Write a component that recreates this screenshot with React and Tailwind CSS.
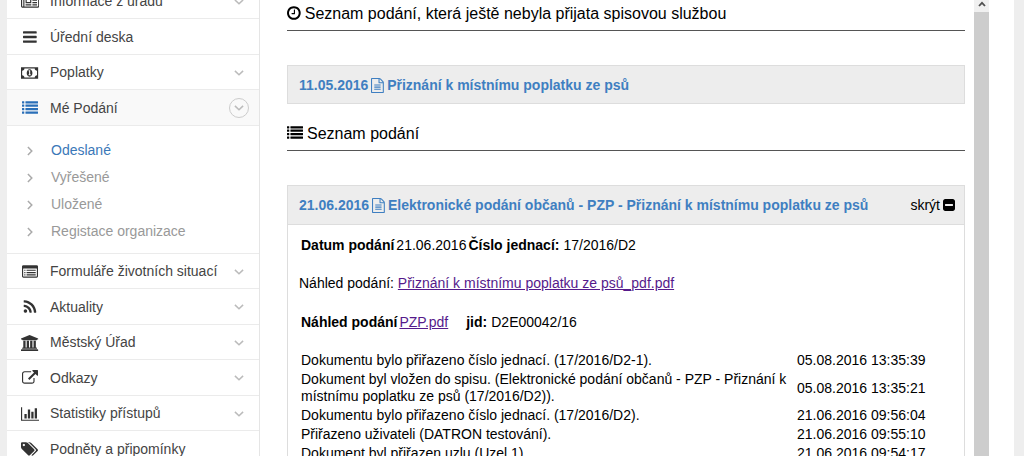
import React from "react";

const ICONS = {
  newspaper: {
    w: 2048,
    d: "M1024 512h-384v384h384v-384zm128 640v128h-640v-128h640zm0-768v640h-640v-640h640zm640 768v128h-512v-128h512zm0-256v128h-512v-128h512zm0-256v128h-512v-128h512zm0-256v128h-512v-128h512zm-1536 960v-960h-128v960q0 26 19 45t45 19 45-19 19-45zm1664 0v-1088h-1536v1088q0 33-11 64h1483q26 0 45-19t19-45zm128-1216v1216q0 80-56 136t-136 56h-1664q-80 0-136-56t-56-136v-1088h256v-128h1792z",
  },
  bars: {
    w: 1536,
    d: "M1536 1344v128q0 26-19 45t-45 19h-1408q-26 0-45-19t-19-45v-128q0-26 19-45t45-19h1408q26 0 45 19t19 45zm0-512v128q0 26-19 45t-45 19h-1408q-26 0-45-19t-19-45v-128q0-26 19-45t45-19h1408q26 0 45 19t19 45zm0-512v128q0 26-19 45t-45 19h-1408q-26 0-45-19t-19-45v-128q0-26 19-45t45-19h1408q26 0 45 19t19 45z",
  },
  money: {
    w: 1920,
    d: "M0 256h1920v1280h-1920zM384 384q0 106-75 181t-181 75v512q106 0 181 75t75 181h1152q0-106 75-181t181-75v-512q-106 0-181-75t-75-181zM960 480q150 0 235 125t85 291-85 291-235 125-235-125-85-291 85-291 235-125zM850 600v110h60v340h-60v110h240v-110h-60v-450z",
  },
  list: {
    w: 1792,
    d: "M32 1280h192l32 32v192l-32 32h-192l-32-32v-192zM32 896h192l32 32v192l-32 32h-192l-32-32v-192zM32 512h192l32 32v192l-32 32h-192l-32-32v-192zM32 128h192l32 32v192l-32 32h-192l-32-32v-192zM416 1280h1344l32 32v192l-32 32h-1344l-32-32v-192zM416 896h1344l32 32v192l-32 32h-1344l-32-32v-192zM416 512h1344l32 32v192l-32 32h-1344l-32-32v-192zM416 128h1344l32 32v192l-32 32h-1344l-32-32v-192z",
  },
  listAlt: {
    w: 1792,
    d: "M160 128h1472q66 0 113 47t47 113v1088q0 66-47 113t-113 47h-1472q-66 0-113-47t-47-113v-1088q0-66 47-113t113-47zM160 512q-32 0-32 32v832q0 32 32 32h1472q32 0 32-32v-832q0-32-32-32zM256 640h128v128h-128zM256 896h128v128h-128zM256 1152h128v128h-128zM512 640h1024v128h-1024zM512 896h1024v128h-1024zM512 1152h1024v128h-1024z",
  },
  rss: {
    w: 1792,
    d: "M576 1344q0 80-56 136t-136 56-136-56-56-136 56-136 136-56 136 56 56 136zm512 123q2 28-17 48-18 21-47 21h-135q-25 0-43-16.5t-20-41.5q-22-229-184.5-391.5t-391.5-184.5q-25-2-41.5-20t-16.5-43v-135q0-29 21-47 17-17 43-17h5q160 13 306 80.5t259 181.5q114 113 181.5 259t80.5 306zm512 2q2 27-18 47-18 20-46 20h-143q-26 0-44.5-17.5t-19.5-42.5q-12-215-101-408.5t-231.5-336-336-231.5-408.5-102q-25-1-42.5-19.5t-17.5-43.5v-143q0-28 20-46 18-18 44-18h3q262 13 501.5 120t425.5 294q187 186 294 425.5t120 501.5z",
  },
  university: {
    w: 1920,
    d: "M960 0l960 384v128h-128q0 26-20.5 45t-48.5 19h-1526q-28 0-48.5-19t-20.5-45h-128v-128zm-704 640h256v768h128v-768h256v768h128v-768h256v768h128v-768h256v768h59q28 0 48.5 19t20.5 45v64h-1664v-64q0-26 20.5-45t48.5-19h59v-768zm1595 960q28 0 48.5 19t20.5 45v128h-1920v-128q0-26 20.5-45t48.5-19h1782z",
  },
  external: {
    w: 1792,
    d: "M1408 928v320q0 119-84.5 203.5t-203.5 84.5h-832q-119 0-203.5-84.5t-84.5-203.5v-832q0-119 84.5-203.5t203.5-84.5h704q14 0 23 9t9 23v64q0 14-9 23t-23 9h-704q-66 0-113 47t-47 113v832q0 66 47 113t113 47h832q66 0 113-47t47-113v-320q0-14 9-23t23-9h64q14 0 23 9t9 23zm384-864v512q0 26-19 45t-45 19-45-19l-176-176-652 652q-10 10-23 10t-23-10l-114-114q-10-10-10-23t10-23l652-652-176-176q-19-19-19-45t19-45 45-19h512q26 0 45 19t19 45z",
  },
  chart: {
    w: 2048,
    d: "M640 896v512h-256v-512h256zm384-512v1024h-256v-1024h256zm1024 1152v128h-2048v-1536h128v1408h1920zm-640-896v768h-256v-768h256zm384-384v1152h-256v-1152h256z",
  },
  tags: {
    w: 1920,
    d: "M448 448q0-53-37.5-90.5t-90.5-37.5-90.5 37.5-37.5 90.5 37.5 90.5 90.5 37.5 90.5-37.5 37.5-90.5zm1067 576q0 53-37 90l-491 492q-39 37-91 37-53 0-90-37l-715-716q-38-37-64.5-101t-26.5-117v-416q0-52 38-90t90-38h416q53 0 117 26.5t102 64.5l715 714q37 39 37 91zm384 0q0 53-37 90l-491 492q-39 37-91 37-36 0-59-14t-53-45l470-470q37-37 37-90 0-52-37-91l-715-714q-38-38-102-64.5t-117-26.5h224q53 0 117 26.5t102 64.5l715 714q37 39 37 91z",
  },
  clock: {
    x: 128,
    w: 1536,
    d: "M1024 544v448q0 14-9 23t-23 9h-320q-14 0-23-9t-9-23v-64q0-14 9-23t23-9h224v-352q0-14 9-23t23-9h64q14 0 23 9t9 23zm416 352q0-148-73-273t-198-198-273-73-273 73-198 198-73 273 73 273 198 198 273 73 273-73 198-198 73-273zm224 0q0 209-103 385.5t-279.5 279.5-385.5 103-385.5-103-279.5-279.5-103-385.5 103-385.5 279.5-279.5 385.5-103 385.5 103 279.5 279.5 103 385.5z",
  },
  file: {
    x: 128,
    w: 1536,
    d: "M1596 380q28 28 48 76t20 88v1152q0 40-28 68t-68 28h-1344q-40 0-68-28t-28-68v-1600q0-40 28-68t68-28h896q40 0 88 20t76 48zm-444-244v376h376q-10-29-22-41l-313-313q-12-12-41-22zm384 1528v-1024h-416q-40 0-68-28t-28-68v-416h-768v1536h1280zm-1024-864q0-14 9-23t23-9h704q14 0 23 9t9 23v64q0 14-9 23t-23 9h-704q-14 0-23-9t-9-23v-64zm736 224q14 0 23 9t9 23v64q0 14-9 23t-23 9h-704q-14 0-23-9t-9-23v-64q0-14 9-23t23-9h704zm0 256q14 0 23 9t9 23v64q0 14-9 23t-23 9h-704q-14 0-23-9t-9-23v-64q0-14 9-23t23-9h704z",
  },
  minusSquare: {
    x: 128,
    w: 1536,
    d: "M1408 960v-128q0-26-19-45t-45-19h-896q-26 0-45 19t-19 45v128q0 26 19 45t45 19h896q26 0 45-19t19-45zm256-544v960q0 119-84.5 203.5t-203.5 84.5h-960q-119 0-203.5-84.5t-84.5-203.5v-960q0-119 84.5-203.5t203.5-84.5h960q119 0 203.5 84.5t84.5 203.5z",
  },
};

function Icon({ name, className }) {
  const { x = 0, w, d } = ICONS[name];
  return (
    <svg
      viewBox={`${x} 0 ${w} 1792`}
      fill="currentColor"
      fillRule="evenodd"
      aria-hidden="true"
      className={`w-auto shrink-0 ${className}`}
    >
      <path d={d} />
    </svg>
  );
}

function Chevron({ className }) {
  return (
    <svg
      viewBox="0 0 10 6"
      fill="none"
      stroke="currentColor"
      strokeWidth="1.5"
      aria-hidden="true"
      className={`h-[6px] w-[10px] ${className}`}
    >
      <path d="M0.9 0.9 5 4.8 9.1 0.9" />
    </svg>
  );
}

function MenuItem({ icon, label, arrow, active }) {
  return (
    <li
      className={`flex border-b border-[#ebebeb] odd:h-[35px] even:h-[36px] ${
        active ? "bg-[#f9f9f9]" : ""
      }`}
    >
      <a
        href="#"
        aria-current={active ? "true" : undefined}
        className="flex flex-1 items-center pt-px pr-[10px] pl-[13px]"
      >
        <span
          className={`flex w-5 justify-center ${active ? "text-[#2a6fb8]" : "text-[#333]"}`}
        >
          <Icon name={icon} className="h-4" />
        </span>
        <span className="ml-[10px] flex-1">{label}</span>
        {arrow && (
          <span
            className={`flex size-5 items-center justify-center rounded-full border text-[#bbb] ${
              active ? "border-[#ccc]" : "border-transparent"
            }`}
          >
            <Chevron />
          </span>
        )}
      </a>
    </li>
  );
}

const topItems = [
  { icon: "newspaper", label: "Informace z úřadu", arrow: true },
  { icon: "bars", label: "Úřední deska" },
  { icon: "money", label: "Poplatky", arrow: true },
  { icon: "list", label: "Mé Podání", arrow: true, active: true },
];

const subItems = ["Odeslané", "Vyřešené", "Uložené", "Registace organizace"];

const bottomItems = [
  { icon: "listAlt", label: "Formuláře životních situací", arrow: true },
  { icon: "rss", label: "Aktuality", arrow: true },
  { icon: "university", label: "Městský Úřad", arrow: true },
  { icon: "external", label: "Odkazy", arrow: true },
  { icon: "chart", label: "Statistiky přístupů", arrow: true },
  { icon: "tags", label: "Podněty a připomínky" },
];

const history = [
  ["Dokumentu bylo přiřazeno číslo jednací. (17/2016/D2-1).", "05.08.2016 13:35:39"],
  [
    "Dokument byl vložen do spisu. (Elektronické podání občanů - PZP - Přiznání k místnímu poplatku ze psů (17/2016/D2)).",
    "05.08.2016 13:35:21",
  ],
  ["Dokumentu bylo přiřazeno číslo jednací. (17/2016/D2).", "21.06.2016 09:56:04"],
  ["Přiřazeno uživateli (DATRON testování).", "21.06.2016 09:55:10"],
  ["Dokument byl přiřazen uzlu (Uzel 1)", "21.06.2016 09:54:17"],
];

function Sidebar() {
  return (
    <nav className="-mt-4 w-[253px] shrink-0 self-stretch border-r border-[#e5e5e5] text-[#444]">
      <ul>
        {topItems.map((item) => (
          <MenuItem key={item.label} {...item} />
        ))}
      </ul>
      <ul className="border-b border-[#ebebeb] pt-[11px] pb-2">
        {subItems.map((label, i) => (
          <li key={label}>
            <a
              href="#"
              className={`flex h-[27px] items-center gap-4 pl-[18px] ${
                i === 0 ? "text-[#3a78b8]" : "text-[#999]"
              }`}
            >
              <Chevron className="-rotate-90 text-[#aaa]" />
              {label}
            </a>
          </li>
        ))}
      </ul>
      <ul>
        {bottomItems.map((item) => (
          <MenuItem key={item.label} {...item} />
        ))}
      </ul>
    </nav>
  );
}

function SectionHeading({ icon, children }) {
  return (
    <h2 className="flex h-[31px] items-start gap-1 border-b border-[#555] pt-1 text-base leading-5">
      <Icon name={icon} className="mt-px h-4" />
      {children}
    </h2>
  );
}

function SubmissionLink({ date, title }) {
  return (
    <a href="#" className="flex items-center gap-[3px] font-bold text-[#3f7fc1]">
      {date}
      <Icon name="file" className="h-[15px]" />
      {title}
    </a>
  );
}

export default function App() {
  return (
    <div className="flex h-screen overflow-hidden bg-[#eee] px-[10px] pl-[7px] font-['Liberation_Sans',Arial,sans-serif] text-sm leading-[17px] text-black">
      <div className="flex min-w-0 flex-1 items-start bg-white">
        <Sidebar />
        <main className="min-w-0 flex-1 pr-[9px] pl-[27px]">
          <SectionHeading icon="clock">
            Seznam podání, která ještě nebyla přijata spisovou službou
          </SectionHeading>
          <div className="mt-[34px] flex h-[39px] items-center border border-[#ddd] bg-[#ededed] px-[11px] pt-px">
            <SubmissionLink date="11.05.2016" title="Přiznání k místnímu poplatku ze psů" />
          </div>
          <div className="mt-4">
            <SectionHeading icon="list">Seznam podání</SectionHeading>
          </div>
          <section className="mt-[34px] border border-[#ddd]">
            <header className="flex h-[39px] items-center justify-between border-b border-[#ddd] bg-[#ededed] pr-[9px] pl-[11px]">
              <SubmissionLink
                date="21.06.2016"
                title="Elektronické podání občanů - PZP - Přiznání k místnímu poplatku ze psů"
              />
              <button type="button" className="flex items-center gap-[3px]">
                skrýt
                <Icon name="minusSquare" className="h-[14px]" />
              </button>
            </header>
            <div className="pt-[10px] pr-[9px] pl-[11px]">
              <p className="flex gap-[2px] p-[2px]">
                <b>Datum podání</b>
                <span>21.06.2016</span>
                <b>Číslo jednací:</b>
                <span className="ml-[2px]">17/2016/D2</span>
              </p>
              <p className="mt-[19px]">
                Náhled podání:{" "}
                <a href="#" className="text-[#551a8b] underline">
                  Přiznání k místnímu poplatku ze psů_pdf.pdf
                </a>
              </p>
              <p className="mt-5 flex gap-[2px] p-[2px]">
                <b>Náhled podání</b>
                <a href="#" className="text-[#551a8b] underline">
                  PZP.pdf
                </a>
                <b className="ml-4">jid:</b>
                <span className="ml-[2px]">D2E00042/16</span>
              </p>
              <table className="mt-[17px] w-full border-separate border-spacing-[2px]">
                <tbody>
                  {history.map(([text, time]) => (
                    <tr key={time}>
                      <td className="pr-2">{text}</td>
                      <td className="w-[156px]">{time}</td>
                    </tr>
                  ))}
                </tbody>
              </table>
            </div>
          </section>
        </main>
        <div className="flex w-[15px] shrink-0 flex-col self-stretch bg-[#cdcdcd]">
          <button
            type="button"
            aria-label="Posunout nahoru"
            className="flex h-3 items-start justify-center bg-[#f0f0f0] text-[#505050]"
          >
            <svg
              viewBox="0 0 8 6"
              fill="none"
              stroke="currentColor"
              strokeWidth="1.8"
              className="mt-px h-[6px] w-2"
            >
              <path d="M1 5 4 1.8 7 5" />
            </svg>
          </button>
        </div>
        <div className="w-[25px] shrink-0" />
      </div>
    </div>
  );
}
